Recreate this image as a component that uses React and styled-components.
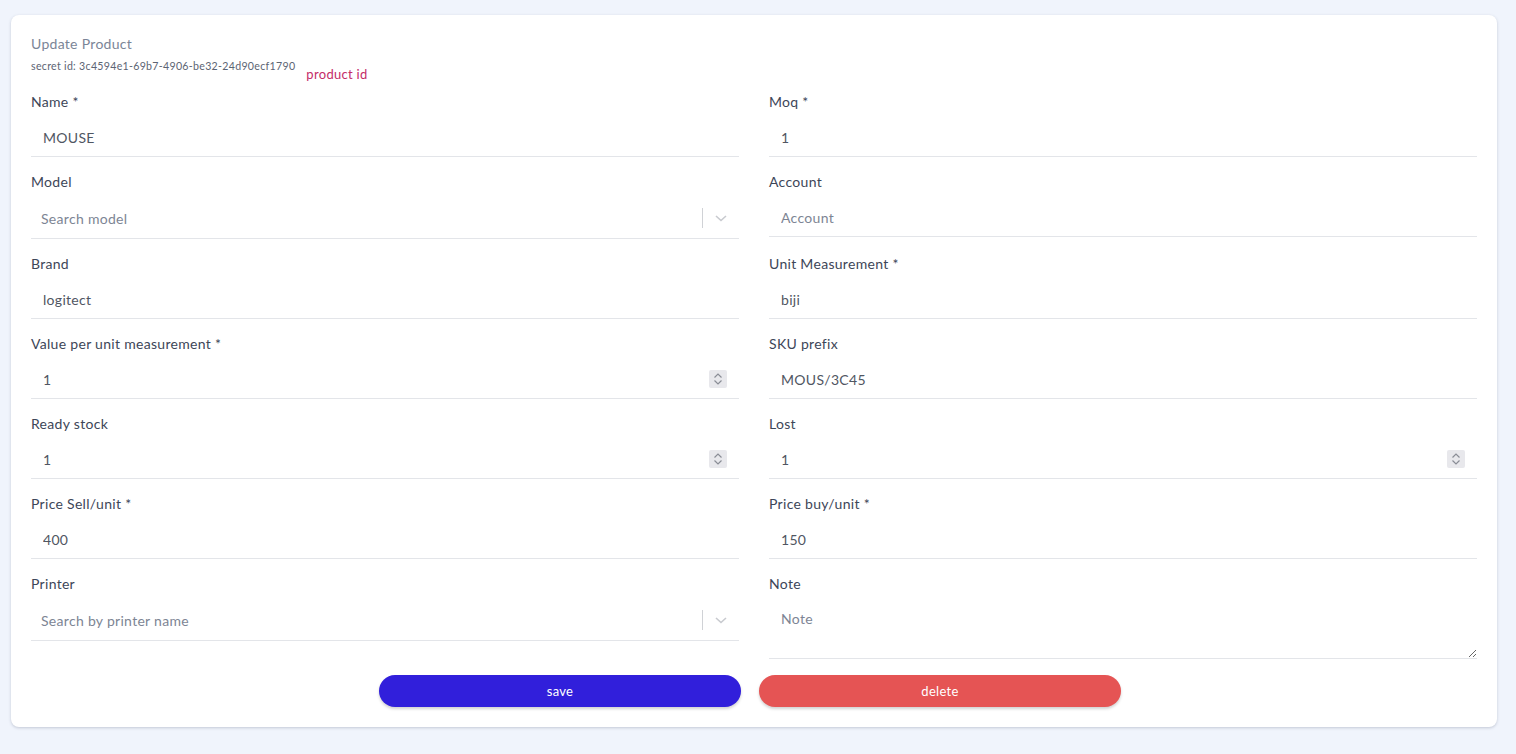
import React from 'react'
import styled, { createGlobalStyle } from 'styled-components'

const GlobalStyle = createGlobalStyle`
  html, body {
    margin: 0;
    padding: 0;
    background: #f0f4fc;
    font-family: Lato, "Open Sans", sans-serif;
    letter-spacing: 0.3px;
  }
  * {
    box-sizing: border-box;
  }
`

const Page = styled.div`
  padding: 15px 19px 26px 11px;
  min-height: 754px;
`

const Card = styled.div`
  background: #fff;
  border-radius: 8px;
  box-shadow: 0 1px 3px rgba(60, 72, 100, 0.25);
  padding: 19px 20px 20px;
`

const Title = styled.div`
  color: #7b8597;
  font-size: 14px;
  line-height: 20px;
`

const IdRow = styled.div`
  display: flex;
  align-items: flex-start;
  gap: 11px;
  height: 38px;
`

const SecretId = styled.span`
  color: #5c6473;
  font-size: 10.6px;
  line-height: 16px;
  margin-top: 4px;
`

const ProductId = styled.span`
  color: #c42b68;
  font-size: 13px;
  line-height: 16px;
  margin-top: 12px;
`

const Grid = styled.div`
  display: grid;
  grid-template-columns: 1fr 1fr;
  column-gap: 30px;
  row-gap: 15px;
  align-items: start;
`

const Field = styled.div`
  display: flex;
  flex-direction: column;
`

const Label = styled.label`
  color: #3d4658;
  font-size: 14px;
  line-height: 20px;
  margin-bottom: 6px;
`

const Box = styled.div`
  display: flex;
  align-items: center;
  height: ${p => (p.$tall ? 41 : 39)}px;
  border-bottom: 1px solid #e3e5e9;
`

const Input = styled.input`
  flex: 1;
  min-width: 0;
  border: none;
  outline: none;
  background: transparent;
  font-family: inherit;
  letter-spacing: inherit;
  font-size: 14px;
  color: #505662;
  padding: 0 ${p => (p.$select ? 10 : 12)}px;
  &::placeholder {
    color: #7d8594;
  }
`

const Spinner = styled.span`
  width: 18px;
  height: 18px;
  margin-right: 12px;
  background: #e8e8ec;
  border-radius: 2px;
  display: flex;
  align-items: center;
  justify-content: center;
`

const Divider = styled.span`
  width: 1px;
  height: 20px;
  background: #d0d2d6;
`

const Chevron = styled.span`
  width: 36px;
  display: flex;
  justify-content: center;
  align-items: center;
`

const TextArea = styled.textarea`
  height: 59px;
  border: none;
  border-bottom: 1px solid #e3e5e9;
  outline: none;
  resize: vertical;
  font-family: inherit;
  letter-spacing: inherit;
  font-size: 14px;
  color: #505662;
  padding: 10px 12px;
  &::placeholder {
    color: #7d8594;
  }
`

const Actions = styled.div`
  display: flex;
  justify-content: center;
  gap: 18px;
  margin-top: 16px;
  padding-right: 8px;
`

const Button = styled.button`
  width: 362px;
  height: 32px;
  border: none;
  border-radius: 16px;
  background: ${p => (p.$danger ? '#e55454' : '#311fdb')};
  color: #fff;
  font-family: inherit;
  letter-spacing: inherit;
  font-size: 13px;
  box-shadow: 0 2px 3px rgba(0, 0, 0, 0.18);
  cursor: pointer;
`

const SpinIcon = () => (
  <svg width="10" height="14" viewBox="0 0 10 14" fill="none" stroke="#8a8d96" strokeWidth="1.2">
    <path d="M1.5 5.5 L5 2 L8.5 5.5" />
    <path d="M1.5 8.5 L5 12 L8.5 8.5" />
  </svg>
)

const ChevronIcon = () => (
  <svg width="14" height="10" viewBox="0 0 14 10" fill="none" stroke="#c8cacf" strokeWidth="1.6">
    <path d="M2 3 L7 7.5 L12 3" />
  </svg>
)

const TextField = ({ label, value, placeholder, number }) => (
  <Field>
    <Label>{label}</Label>
    <Box>
      <Input defaultValue={value} placeholder={placeholder} />
      {number && (
        <Spinner>
          <SpinIcon />
        </Spinner>
      )}
    </Box>
  </Field>
)

const SelectField = ({ label, placeholder }) => (
  <Field>
    <Label>{label}</Label>
    <Box $tall>
      <Input $select placeholder={placeholder} />
      <Divider />
      <Chevron>
        <ChevronIcon />
      </Chevron>
    </Box>
  </Field>
)

const App = () => (
  <Page>
    <GlobalStyle />
    <Card>
      <Title>Update Product</Title>
      <IdRow>
        <SecretId>secret id: 3c4594e1-69b7-4906-be32-24d90ecf1790</SecretId>
        <ProductId>product id</ProductId>
      </IdRow>
      <Grid>
        <TextField label="Name *" value="MOUSE" />
        <TextField label="Moq *" value="1" />
        <SelectField label="Model" placeholder="Search model" />
        <TextField label="Account" placeholder="Account" />
        <TextField label="Brand" value="logitect" />
        <TextField label="Unit Measurement *" value="biji" />
        <TextField label="Value per unit measurement *" value="1" number />
        <TextField label="SKU prefix" value="MOUS/3C45" />
        <TextField label="Ready stock" value="1" number />
        <TextField label="Lost" value="1" number />
        <TextField label="Price Sell/unit *" value="400" />
        <TextField label="Price buy/unit *" value="150" />
        <SelectField label="Printer" placeholder="Search by printer name" />
        <Field>
          <Label>Note</Label>
          <TextArea placeholder="Note" />
        </Field>
      </Grid>
      <Actions>
        <Button>save</Button>
        <Button $danger>delete</Button>
      </Actions>
    </Card>
  </Page>
)

export default App
